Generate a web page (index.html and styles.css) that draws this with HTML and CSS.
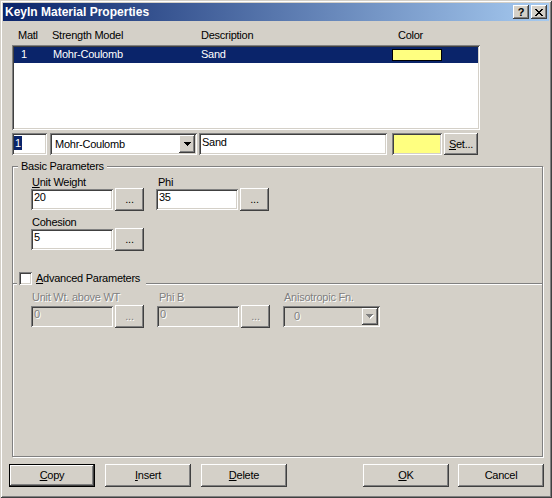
FILE: index.html
```html
<!DOCTYPE html>
<html>
<head>
<meta charset="utf-8">
<title>KeyIn Material Properties</title>
<link rel="stylesheet" href="styles.css">
</head>
<body>
<div class="window">
  <div class="titlebar">
    <span class="title">KeyIn Material Properties</span>
    <div class="tb-buttons">
      <span class="tb-btn raised help">?</span>
      <span class="tb-btn raised"><svg width="8" height="7" viewBox="0 0 8 7" shape-rendering="crispEdges"><path fill="#000" d="M0 0h2v1H0zM6 0h2v1H6zM1 1h2v1H1zM5 1h2v1H5zM2 2h4v1H2zM3 3h2v1H3zM2 4h4v1H2zM1 5h2v1H1zM5 5h2v1H5zM0 6h2v1H0zM6 6h2v1H6z"/></svg></span>
    </div>
  </div>
  <div class="content">
    <div class="list-header">
      <span>Matl</span><span>Strength Model</span><span>Description</span><span>Color</span>
    </div>
    <div class="listbox sunken">
      <div class="list-row selected">
        <span>1</span><span>Mohr-Coulomb</span><span>Sand</span><span class="list-swatch"></span>
      </div>
    </div>
    <div class="edit-row">
      <div class="textbox sunken w-matl"><span class="hl">1</span></div>
      <div class="combo sunken w-model">
        <span class="combo-text">Mohr-Coulomb</span>
        <span class="combo-btn raised"><svg width="7" height="4" viewBox="0 0 7 4" shape-rendering="crispEdges"><path fill="#000" d="M0 0h7v1H0zM1 1h5v1H1zM2 2h3v1H2zM3 3h1v1H3z"/></svg></span>
      </div>
      <div class="textbox sunken w-desc">Sand</div>
      <div class="color-well sunken"></div>
      <button class="btn raised btn-set"><u>S</u>et...</button>
    </div>

    <div class="group group-basic">
      <div class="legend legend-basic">Basic Parameters</div>
      <div class="fields">
        <div class="field">
          <div class="field-label"><u>U</u>nit Weight</div>
          <div class="field-input">
            <div class="textbox sunken">20</div>
            <button class="btn raised dots">...</button>
          </div>
        </div>
        <div class="field">
          <div class="field-label lbl-2">Phi</div>
          <div class="field-input">
            <div class="textbox sunken">35</div>
            <button class="btn raised dots">...</button>
          </div>
        </div>
        <div class="field">
          <div class="field-label">Cohesion</div>
          <div class="field-input">
            <div class="textbox sunken">5</div>
            <button class="btn raised dots">...</button>
          </div>
        </div>
      </div>
    </div>

    <div class="group group-adv">
      <div class="legend legend-adv"><span class="checkbox sunken"></span><span><u>A</u>dvanced Parameters</span></div>
      <div class="fields fields-adv">
        <div class="field">
          <div class="field-label disabled-text">Unit Wt. above WT</div>
          <div class="field-input">
            <div class="textbox sunken disabled"><span class="disabled-text">0</span></div>
            <button class="btn raised dots disabled-text">...</button>
          </div>
        </div>
        <div class="field">
          <div class="field-label lbl-2 disabled-text">Phi B</div>
          <div class="field-input">
            <div class="textbox sunken disabled"><span class="disabled-text">0</span></div>
            <button class="btn raised dots disabled-text">...</button>
          </div>
        </div>
        <div class="field">
          <div class="field-label disabled-text">Anisotropic Fn.</div>
          <div class="field-input">
            <div class="combo sunken combo-disabled">
              <span class="combo-text disabled-text">0</span>
              <span class="combo-btn raised"><svg width="8" height="5" viewBox="0 0 8 5" shape-rendering="crispEdges"><path fill="#fff" d="M1 1h7v1H1zM2 2h5v1H2zM3 3h3v1H3zM4 4h1v1H4z"/><path fill="#808080" d="M0 0h7v1H0zM1 1h5v1H1zM2 2h3v1H2zM3 3h1v1H3z"/></svg></span>
            </div>
          </div>
        </div>
      </div>
    </div>

    <div class="button-row">
      <button class="btn raised default"><u>C</u>opy</button>
      <button class="btn raised btn-gap"><u>I</u>nsert</button>
      <button class="btn raised btn-gap"><u>D</u>elete</button>
      <button class="btn raised btn-ok"><u>O</u>K</button>
      <button class="btn raised btn-cancel">Cancel</button>
    </div>
  </div>
</div>
</body>
</html>
```

FILE: styles.css
```css
* { box-sizing: border-box; }
html, body { margin: 0; padding: 0; }
body {
  width: 552px;
  height: 498px;
  overflow: hidden;
  background: #d4d0c8;
  font-family: "Liberation Sans", Arial, sans-serif;
  font-size: 11px;
  letter-spacing: -0.25px;
  color: #000;
}
button {
  font: inherit;
  letter-spacing: inherit;
  color: inherit;
  border: 0;
  margin: 0;
  padding: 0;
  background: #d4d0c8;
}
.window {
  width: 552px;
  height: 498px;
  padding: 3px;
  background: #d4d0c8;
  box-shadow: inset 1px 1px 0 #d4d0c8, inset -1px -1px 0 #404040, inset 2px 2px 0 #fff, inset -2px -2px 0 #808080;
}
.titlebar {
  height: 18px;
  display: flex;
  align-items: center;
  justify-content: space-between;
  padding: 0 2px 0 2px;
  background: linear-gradient(90deg, #0a246a, #a6caf0);
}
.title {
  color: #fff;
  font-weight: bold;
  font-size: 12px;
  letter-spacing: 0;
  line-height: 18px;
}
.tb-buttons { display: flex; gap: 2px; }
.tb-btn {
  width: 16px;
  height: 14px;
  display: flex;
  align-items: center;
  justify-content: center;
}
.help {
  font-weight: bold;
  font-size: 11px;
  line-height: 14px;
  letter-spacing: 0;
}
.raised {
  background: #d4d0c8;
  box-shadow: inset -1px -1px 0 #404040, inset 1px 1px 0 #fff, inset -2px -2px 0 #808080, inset 2px 2px 0 #d4d0c8;
}
.sunken {
  box-shadow: inset 1px 1px 0 #808080, inset -1px -1px 0 #fff, inset 2px 2px 0 #404040, inset -2px -2px 0 #d4d0c8;
}
.content { padding-left: 9px; }

.list-header {
  margin-top: 7px;
  height: 14px;
  line-height: 14px;
  width: 468px;
  display: grid;
  grid-template-columns: 34px 149px 197px auto;
  padding-left: 6px;
  white-space: nowrap;
}
.listbox {
  margin-top: 3px;
  width: 468px;
  height: 85px;
  padding: 2px;
  background: #fff;
}
.list-row {
  height: 16px;
  line-height: 12px;
  display: grid;
  grid-template-columns: 32px 148px 191px auto;
  padding-left: 7px;
  align-items: start;
  white-space: nowrap;
}
.list-row span { padding-top: 1px; }
.list-row.selected { background: #0a246a; color: #fff; }
.list-row .list-swatch {
  width: 50px;
  height: 12px;
  margin-top: 2px;
  padding: 0;
  background: #ffff80;
  border: 1px solid #000;
}

.edit-row {
  margin-top: 3px;
  display: flex;
  height: 22px;
}
.textbox {
  background: #fff;
  height: 21px;
  padding: 1px 0 0 3px;
  line-height: 14px;
  white-space: nowrap;
  overflow: hidden;
}
.textbox.disabled { background: #d4d0c8; }
.w-matl { width: 35px; height: 22px; padding: 3px 0 0 2px; }
.hl {
  display: inline-block;
  background: #0a246a;
  color: #fff;
  line-height: 14px;
  padding: 0 1px;
}
.combo {
  display: flex;
  background: #fff;
  padding: 2px;
}
.w-model { width: 147px; height: 22px; margin-left: 3px; }
.combo-text {
  flex: 1;
  line-height: 18px;
  padding-left: 3px;
  white-space: nowrap;
}
.combo-btn {
  width: 16px;
  height: 18px;
  display: flex;
  align-items: center;
  justify-content: center;
}
.w-desc { width: 188px; height: 22px; margin-left: 2px; padding-top: 2px; }
.color-well { width: 50px; height: 22px; margin-left: 5px; background: #ffff80; }
.btn-set { width: 34px; height: 22px; margin-left: 2px; line-height: 20px; }

.group {
  position: relative;
  width: 531px;
  border: 1px solid #808080;
  box-shadow: inset 1px 1px 0 #fff, 1px 1px 0 #fff;
}
.group-basic { margin-top: 11px; height: 118px; padding: 8px 0 0 18px; }
.group-adv { margin-top: -1px; height: 174px; padding: 6px 0 0 18px; }
.legend {
  position: absolute;
  background: #d4d0c8;
  height: 14px;
  line-height: 14px;
  white-space: nowrap;
}
.legend-basic { top: -8px; left: 5px; padding: 0 3px; }
.legend-adv {
  top: -13px;
  left: 4px;
  padding: 0 6px 0 2px;
  display: flex;
  align-items: center;
}
.checkbox {
  width: 13px;
  height: 13px;
  background: #fff;
  margin-right: 4px;
}

.fields {
  display: grid;
  grid-template-columns: 113px 113px;
  column-gap: 12px;
  row-gap: 5px;
  align-items: start;
  justify-content: start;
}
.fields-adv {
  grid-template-columns: 113px 113px 97px;
  column-gap: 13px;
}
.field-label {
  height: 14px;
  line-height: 14px;
  padding-left: 1px;
  white-space: nowrap;
}
.fields-adv .field-label { margin-bottom: 2px; }
.lbl-2 { padding-left: 2px; }
.field-input {
  display: flex;
  align-items: center;
  height: 21px;
}
.field-input .textbox { width: 82px; }
.dots {
  width: 29px;
  height: 23px;
  margin-left: 2px;
  line-height: 23px;
  flex: none;
}
.combo-disabled {
  width: 97px;
  height: 21px;
  background: #d4d0c8;
}
.combo-disabled .combo-text { padding-left: 9px; line-height: 17px; }
.combo-disabled .combo-btn { height: 17px; }
.disabled-text {
  color: #808080;
  text-shadow: 1px 1px 0 #fff;
}

.button-row {
  margin-top: 7px;
  margin-left: -3px;
  display: flex;
  height: 23px;
}
.btn {
  text-align: center;
}
.button-row .btn {
  width: 86px;
  height: 23px;
  line-height: 21px;
}
.button-row .default {
  box-shadow: inset 1px 1px 0 #000, inset -1px -1px 0 #000, inset -2px -2px 0 #404040, inset 2px 2px 0 #fff, inset -3px -3px 0 #808080;
}
.btn-gap { margin-left: 10px; }
.btn-ok { margin-left: 76px; }
.btn-cancel { margin-left: 9px; }
```
